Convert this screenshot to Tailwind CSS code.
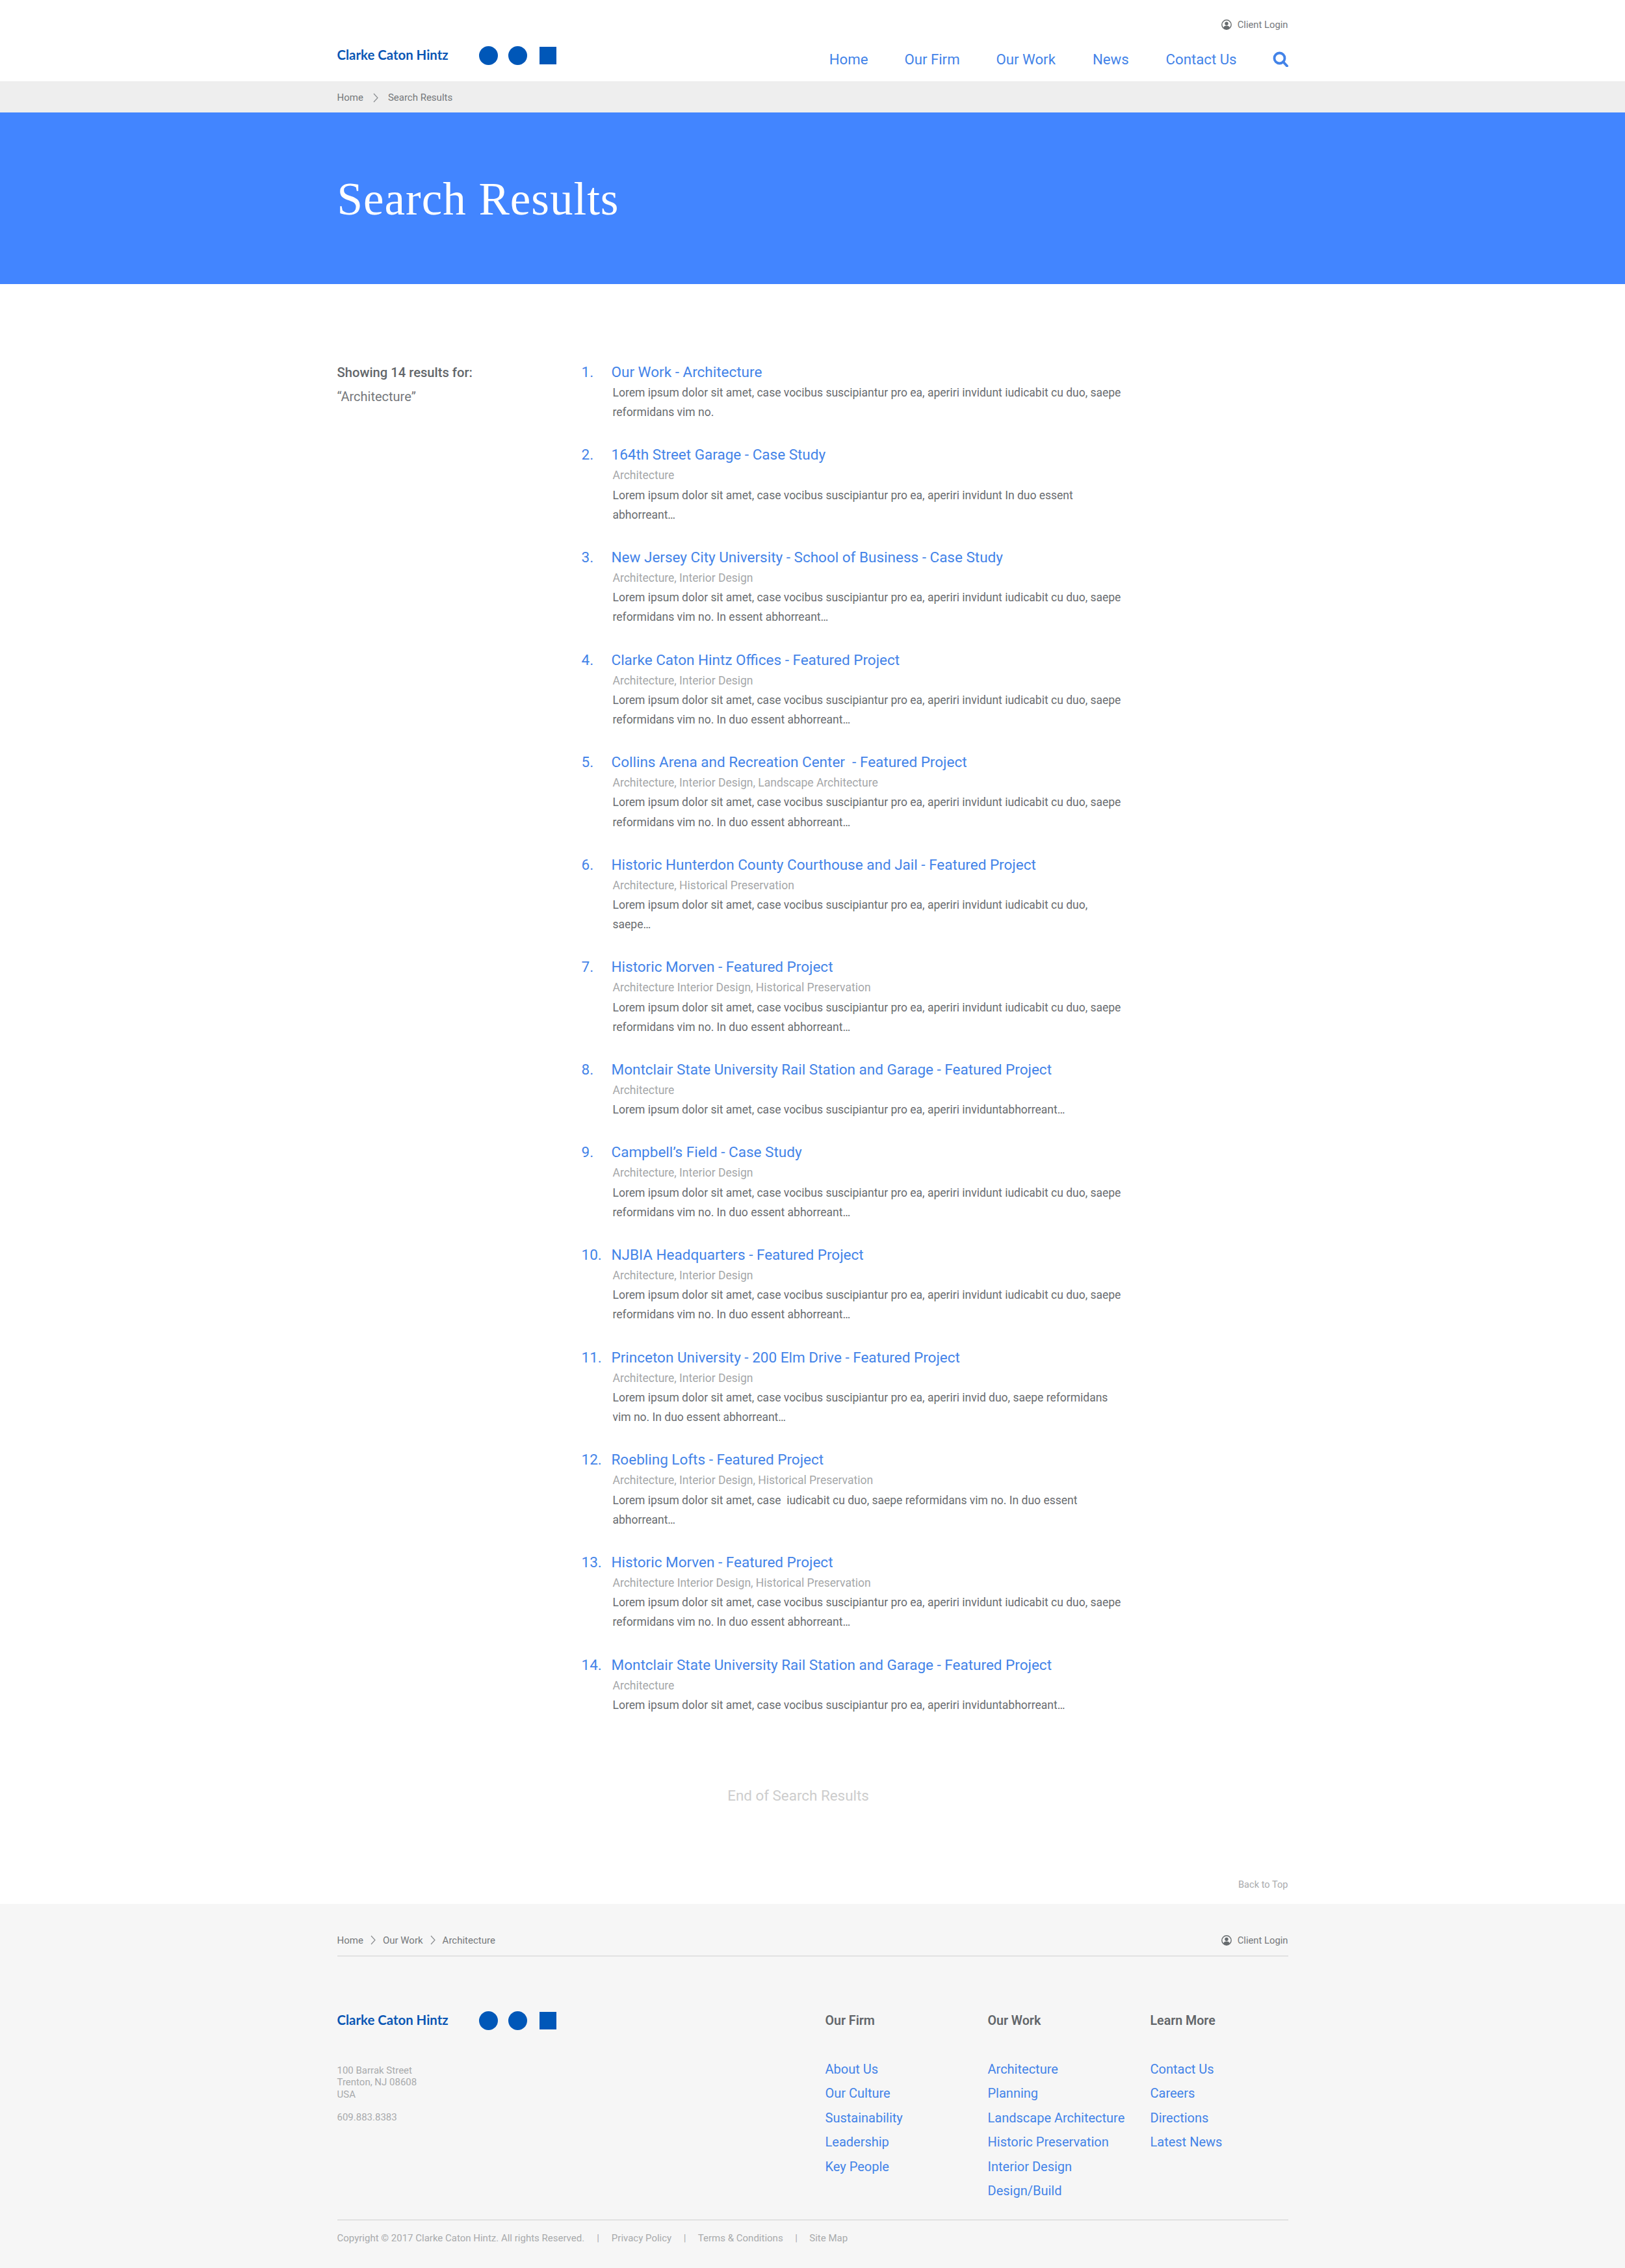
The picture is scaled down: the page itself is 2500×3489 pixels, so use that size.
<!DOCTYPE html>
<html lang="en">
<head>
    <meta charset="UTF-8">
    <title>Search Results - Clarke Caton Hintz</title>
    <script src="https://cdn.jsdelivr.net/npm/@tailwindcss/browser@4"></script>
</head>
<body class="bg-white font-['Roboto',sans-serif] text-[#696c6f]">
    <!-- Header -->
    <header class="h-[125px]">
        <div class="w-[1463px] mx-auto flex justify-between items-start">
            <div class="mt-[71px] flex items-center h-[29px]">
                <span class="w-[218px] font-['Lato',sans-serif] font-bold text-[20.400px] leading-[29px] text-[#0a56b4] -mt-[2px]">Clarke Caton Hintz</span>
                <span class="w-[29px] h-[29px] rounded-full bg-[#0057b8]"></span>
                <span class="w-[29px] h-[29px] rounded-full bg-[#0057b8] ml-[16px]"></span>
                <span class="w-[26px] h-[27px] bg-[#0057b8] ml-[19px]"></span>
            </div>
            <div class="pt-[28px] flex flex-col items-end">
                <a class="flex items-center gap-[9px] text-[14.800px] leading-[20px] text-[#75787b]">
                    <svg class="w-[16px] h-[16px]" viewBox="0 0 16 16"><circle cx="8" cy="8" r="7.200" fill="none" stroke="#666b6e" stroke-width="1.400"/><circle cx="8" cy="6.300" r="2.700" fill="#666b6e"/><path d="M3 13.200c.5-2.500 2.500-3.600 5-3.600s4.500 1.100 5 3.600a7 7 0 0 1-10 0z" fill="#666b6e"/></svg>
                    Client Login
                </a>
                <nav class="mt-[28px] flex items-center text-[22.200px] leading-[30px] text-[#4383e8]">
                    <a>Home</a>
                    <a class="ml-[56px]">Our Firm</a>
                    <a class="ml-[56px]">Our Work</a>
                    <a class="ml-[57px]">News</a>
                    <a class="ml-[57px]">Contact Us</a>
                    <svg class="ml-[55px] w-[24px] h-[24px]" viewBox="0 0 24 24"><circle cx="10.500" cy="10.500" r="8" fill="none" stroke="#4383e8" stroke-width="3.800"/><path d="M16 16l6 6.500" stroke="#4383e8" stroke-width="4" stroke-linecap="round"/></svg>
                </nav>
            </div>
        </div>
    </header>

    <!-- Breadcrumb -->
    <div class="h-[48px] bg-[#eeeeee]">
        <div class="w-[1463px] mx-auto h-full pt-[3px] flex items-center text-[15px] text-[#75787b]">
            <span>Home</span>
            <svg class="w-[8px] h-[15px] mx-[15px]" viewBox="0 0 8 15"><path d="M1 1l6 6.500-6 6.500" fill="none" stroke="#8a8d90" stroke-width="1.200"/></svg>
            <span>Search Results</span>
        </div>
    </div>

    <!-- Hero -->
    <div class="h-[264px] bg-[#4285ff]">
        <div class="w-[1463px] mx-auto h-full pt-[2px] flex items-center">
            <h1 class="font-['Liberation_Serif',serif] text-[71px] leading-none text-white tracking-[1px]">Search Results</h1>
        </div>
    </div>

    <!-- Results -->
    <main class="w-[1463px] mx-auto pt-[118px]">
        <div class="flex">
            <div class="w-[376px]">
                <p class="text-[20.200px] leading-[36px] font-medium text-[#62666a]">Showing 14 results for:</p>
                <p class="text-[20px] leading-[38px] text-[#75787b]">“Architecture”</p>
            </div>
            <ol class="flex-1 text-[17.500px] leading-[30.200px]">
                <li class="mb-[33px]">
                    <div class="flex text-[22.500px] leading-[34px] text-[#4383e8]"><span class="w-[46px]">1.</span><a>Our Work - Architecture</a></div>
                    <p class="ml-[48px]">Lorem ipsum dolor sit amet, case vocibus suscipiantur pro ea, aperiri invidunt iudicabit cu duo, saepe<br>reformidans vim no.</p>
                </li>
                <li class="mb-[33px]">
                    <div class="flex text-[22.500px] leading-[34px] text-[#4383e8]"><span class="w-[46px]">2.</span><a>164th Street Garage - Case Study</a></div>
                    <p class="ml-[48px] text-[#a5a7a9]">Architecture</p>
                    <p class="ml-[48px]">Lorem ipsum dolor sit amet, case vocibus suscipiantur pro ea, aperiri invidunt In duo essent<br>abhorreant…</p>
                </li>
                <li class="mb-[33px]">
                    <div class="flex text-[22.500px] leading-[34px] text-[#4383e8]"><span class="w-[46px]">3.</span><a>New Jersey City University - School of Business - Case Study</a></div>
                    <p class="ml-[48px] text-[#a5a7a9]">Architecture, Interior Design</p>
                    <p class="ml-[48px]">Lorem ipsum dolor sit amet, case vocibus suscipiantur pro ea, aperiri invidunt iudicabit cu duo, saepe<br>reformidans vim no. In essent abhorreant…</p>
                </li>
                <li class="mb-[33px]">
                    <div class="flex text-[22.500px] leading-[34px] text-[#4383e8]"><span class="w-[46px]">4.</span><a>Clarke Caton Hintz Offices - Featured Project</a></div>
                    <p class="ml-[48px] text-[#a5a7a9]">Architecture, Interior Design</p>
                    <p class="ml-[48px]">Lorem ipsum dolor sit amet, case vocibus suscipiantur pro ea, aperiri invidunt iudicabit cu duo, saepe<br>reformidans vim no. In duo essent abhorreant…</p>
                </li>
                <li class="mb-[33px]">
                    <div class="flex text-[22.500px] leading-[34px] text-[#4383e8]"><span class="w-[46px]">5.</span><a class="whitespace-pre">Collins Arena and Recreation Center  - Featured Project</a></div>
                    <p class="ml-[48px] text-[#a5a7a9]">Architecture, Interior Design, Landscape Architecture</p>
                    <p class="ml-[48px]">Lorem ipsum dolor sit amet, case vocibus suscipiantur pro ea, aperiri invidunt iudicabit cu duo, saepe<br>reformidans vim no. In duo essent abhorreant…</p>
                </li>
                <li class="mb-[33px]">
                    <div class="flex text-[22.500px] leading-[34px] text-[#4383e8]"><span class="w-[46px]">6.</span><a>Historic Hunterdon County Courthouse and Jail - Featured Project</a></div>
                    <p class="ml-[48px] text-[#a5a7a9]">Architecture, Historical Preservation</p>
                    <p class="ml-[48px]">Lorem ipsum dolor sit amet, case vocibus suscipiantur pro ea, aperiri invidunt iudicabit cu duo,<br>saepe…</p>
                </li>
                <li class="mb-[33px]">
                    <div class="flex text-[22.500px] leading-[34px] text-[#4383e8]"><span class="w-[46px]">7.</span><a>Historic Morven - Featured Project</a></div>
                    <p class="ml-[48px] text-[#a5a7a9]">Architecture Interior Design, Historical Preservation</p>
                    <p class="ml-[48px]">Lorem ipsum dolor sit amet, case vocibus suscipiantur pro ea, aperiri invidunt iudicabit cu duo, saepe<br>reformidans vim no. In duo essent abhorreant…</p>
                </li>
                <li class="mb-[33px]">
                    <div class="flex text-[22.500px] leading-[34px] text-[#4383e8]"><span class="w-[46px]">8.</span><a>Montclair State University Rail Station and Garage - Featured Project</a></div>
                    <p class="ml-[48px] text-[#a5a7a9]">Architecture</p>
                    <p class="ml-[48px]">Lorem ipsum dolor sit amet, case vocibus suscipiantur pro ea, aperiri inviduntabhorreant…</p>
                </li>
                <li class="mb-[33px]">
                    <div class="flex text-[22.500px] leading-[34px] text-[#4383e8]"><span class="w-[46px]">9.</span><a>Campbell’s Field - Case Study</a></div>
                    <p class="ml-[48px] text-[#a5a7a9]">Architecture, Interior Design</p>
                    <p class="ml-[48px]">Lorem ipsum dolor sit amet, case vocibus suscipiantur pro ea, aperiri invidunt iudicabit cu duo, saepe<br>reformidans vim no. In duo essent abhorreant…</p>
                </li>
                <li class="mb-[33px]">
                    <div class="flex text-[22.500px] leading-[34px] text-[#4383e8]"><span class="w-[46px]">10.</span><a>NJBIA Headquarters - Featured Project</a></div>
                    <p class="ml-[48px] text-[#a5a7a9]">Architecture, Interior Design</p>
                    <p class="ml-[48px]">Lorem ipsum dolor sit amet, case vocibus suscipiantur pro ea, aperiri invidunt iudicabit cu duo, saepe<br>reformidans vim no. In duo essent abhorreant…</p>
                </li>
                <li class="mb-[33px]">
                    <div class="flex text-[22.500px] leading-[34px] text-[#4383e8]"><span class="w-[46px]">11.</span><a>Princeton University - 200 Elm Drive - Featured Project</a></div>
                    <p class="ml-[48px] text-[#a5a7a9]">Architecture, Interior Design</p>
                    <p class="ml-[48px]">Lorem ipsum dolor sit amet, case vocibus suscipiantur pro ea, aperiri invid duo, saepe reformidans<br>vim no. In duo essent abhorreant…</p>
                </li>
                <li class="mb-[33px]">
                    <div class="flex text-[22.500px] leading-[34px] text-[#4383e8]"><span class="w-[46px]">12.</span><a>Roebling Lofts - Featured Project</a></div>
                    <p class="ml-[48px] text-[#a5a7a9]">Architecture, Interior Design, Historical Preservation</p>
                    <p class="ml-[48px] whitespace-pre">Lorem ipsum dolor sit amet, case  iudicabit cu duo, saepe reformidans vim no. In duo essent<br>abhorreant…</p>
                </li>
                <li class="mb-[33px]">
                    <div class="flex text-[22.500px] leading-[34px] text-[#4383e8]"><span class="w-[46px]">13.</span><a>Historic Morven - Featured Project</a></div>
                    <p class="ml-[48px] text-[#a5a7a9]">Architecture Interior Design, Historical Preservation</p>
                    <p class="ml-[48px]">Lorem ipsum dolor sit amet, case vocibus suscipiantur pro ea, aperiri invidunt iudicabit cu duo, saepe<br>reformidans vim no. In duo essent abhorreant…</p>
                </li>
                <li class="mb-[33px]">
                    <div class="flex text-[22.500px] leading-[34px] text-[#4383e8]"><span class="w-[46px]">14.</span><a>Montclair State University Rail Station and Garage - Featured Project</a></div>
                    <p class="ml-[48px] text-[#a5a7a9]">Architecture</p>
                    <p class="ml-[48px]">Lorem ipsum dolor sit amet, case vocibus suscipiantur pro ea, aperiri inviduntabhorreant…</p>
                </li>
            </ol>
        </div>
        <p class="mt-[76px] text-[22.400px] leading-[30px] text-[#cdcdcd] text-center pr-[44px]">End of Search Results</p>
        <div class="mt-[112px] pb-[20px] text-right text-[14.600px] leading-[20px] text-[#a9abad]">Back to Top</div>
    </main>

    <!-- Footer -->
    <footer class="h-[560.200px] bg-[#f6f6f6]">
        <div class="w-[1463px] mx-auto">
            <div class="pt-[44px] pb-[11px] border-b-2 border-[#e2e2e2] flex justify-between items-center text-[15px] leading-[24px] text-[#75787b]">
                <div class="flex items-center">
                    <span>Home</span>
                    <svg class="w-[8px] h-[15px] mx-[11px]" viewBox="0 0 8 15"><path d="M1 1l6 6.500-6 6.500" fill="none" stroke="#8a8d90" stroke-width="1.200"/></svg>
                    <span>Our Work</span>
                    <svg class="w-[8px] h-[15px] mx-[11px]" viewBox="0 0 8 15"><path d="M1 1l6 6.500-6 6.500" fill="none" stroke="#8a8d90" stroke-width="1.200"/></svg>
                    <span>Architecture</span>
                </div>
                <a class="flex items-center gap-[9px] text-[14.800px]">
                    <svg class="w-[16px] h-[16px]" viewBox="0 0 16 16"><circle cx="8" cy="8" r="7.200" fill="none" stroke="#666b6e" stroke-width="1.400"/><circle cx="8" cy="6.300" r="2.700" fill="#666b6e"/><path d="M3 13.200c.5-2.500 2.500-3.600 5-3.600s4.500 1.100 5 3.600a7 7 0 0 1-10 0z" fill="#666b6e"/></svg>
                    Client Login
                </a>
            </div>
            <div class="pt-[84px] pb-[24px] flex border-b-2 border-[#e2e2e2]">
                <div class="w-[751px]">
                    <div class="flex items-center h-[30px]">
                        <span class="w-[218px] font-['Lato',sans-serif] font-bold text-[20.400px] leading-[29px] text-[#0a56b4] -mt-[2px]">Clarke Caton Hintz</span>
                        <span class="w-[29px] h-[29px] rounded-full bg-[#0057b8]"></span>
                        <span class="w-[29px] h-[29px] rounded-full bg-[#0057b8] ml-[16px]"></span>
                        <span class="w-[26px] h-[27px] bg-[#0057b8] ml-[19px]"></span>
                    </div>
                    <p class="mt-[52px] text-[15px] leading-[18.300px] text-[#a8aaac]">100 Barrak Street<br>Trenton, NJ 08608<br>USA</p>
                    <p class="mt-[17px] text-[15px] leading-[18.300px] text-[#a8aaac]">609.883.8383</p>
                </div>
                <div class="w-[250px]">
                    <h4 class="text-[19.600px] leading-[30px] font-semibold text-[#62666a]">Our Firm</h4>
                    <ul class="mt-[41px] text-[20px] leading-[37.500px] text-[#4383e8]">
                        <li>About Us</li>
                        <li>Our Culture</li>
                        <li>Sustainability</li>
                        <li>Leadership</li>
                        <li>Key People</li>
                    </ul>
                </div>
                <div class="w-[250px]">
                    <h4 class="text-[19.600px] leading-[30px] font-semibold text-[#62666a]">Our Work</h4>
                    <ul class="mt-[41px] text-[20px] leading-[37.500px] text-[#4383e8]">
                        <li>Architecture</li>
                        <li>Planning</li>
                        <li>Landscape Architecture</li>
                        <li>Historic Preservation</li>
                        <li>Interior Design</li>
                        <li>Design/Build</li>
                    </ul>
                </div>
                <div class="flex-1">
                    <h4 class="text-[19.600px] leading-[30px] font-semibold text-[#62666a]">Learn More</h4>
                    <ul class="mt-[41px] text-[20px] leading-[37.500px] text-[#4383e8]">
                        <li>Contact Us</li>
                        <li>Careers</li>
                        <li>Directions</li>
                        <li>Latest News</li>
                    </ul>
                </div>
            </div>
            <div class="pt-[17px] flex text-[15px] leading-[20px] text-[#a8aaac]">
                <span>Copyright © 2017 Clarke Caton Hintz. All rights Reserved.</span>
                <span class="mx-[19px]">|</span>
                <span>Privacy Policy</span>
                <span class="mx-[18.500px]">|</span>
                <span>Terms &amp; Conditions</span>
                <span class="mx-[18.500px]">|</span>
                <span>Site Map</span>
            </div>
        </div>
    </footer>
</body>
</html>
